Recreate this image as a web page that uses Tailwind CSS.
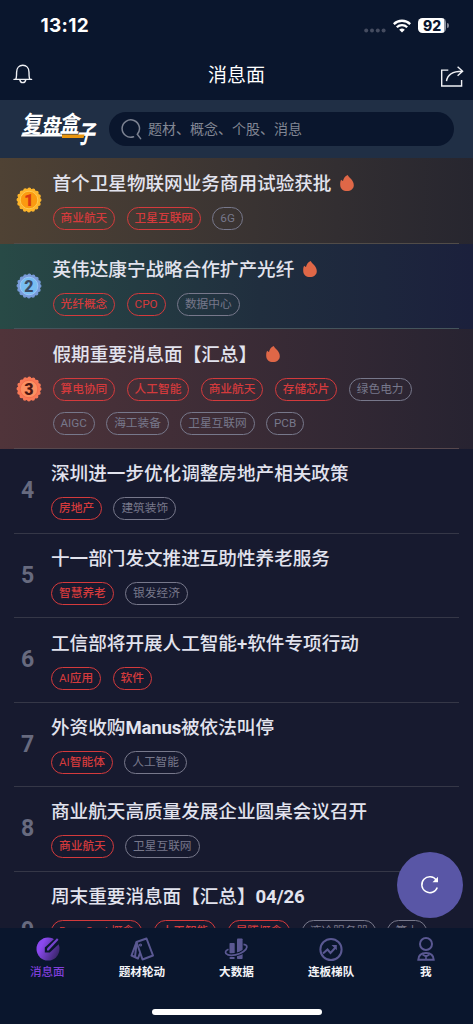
<!DOCTYPE html>
<html lang="zh-CN">
<head>
<meta charset="utf-8">
<title>消息面</title>
<script src="https://cdn.jsdelivr.net/npm/@tailwindcss/browser@4"></script>
</head>
<body class="bg-[#0a162d]">
<svg class="hidden">
  <symbol id="fire" viewBox="0 0 14 16"><path d="M7.800 0C8.600 2.600 13.800 5 13.800 10.200C13.800 13.700 10.800 16 7 16C3.200 16 .2 13.600 .2 9.900C.2 7.600 .3 6 1.200 4.800C1.700 5.500 2.300 5.900 3 6C3.500 3.600 4.800 1.200 7.800 0Z" fill="#df6747"/></symbol>
</svg>
<div class="relative w-[473px] h-[1024px] overflow-hidden flex flex-col font-['Roboto','Noto_Sans_CJK_SC',sans-serif] text-[#e2e3ee]">
  <!-- status bar -->
  <div class="h-[51px] shrink-0 flex items-center justify-between pl-[40.500px] pr-[24px] text-white">
    <span class="font-['Inter',sans-serif] font-bold text-[19px] leading-[22px] tracking-[0.3px] pt-px">13:12</span>
    <div class="flex items-center">
      <svg width="22" height="5" viewBox="0 0 22 5" class="mt-[9px]" fill="#454c60"><circle cx="2.200" cy="2.500" r="2"/><circle cx="8" cy="2.500" r="2"/><circle cx="13.800" cy="2.500" r="2"/><circle cx="19.600" cy="2.500" r="2"/></svg>
      <svg width="18" height="14" viewBox="0 0 18 14" class="ml-[7px]" fill="none" stroke="#fff" stroke-width="2.300"><path d="M.8 5.100a11.700 11.700 0 0 1 16.400 0"/><path d="M3.800 8.300a7.400 7.400 0 0 1 10.400 0"/><path d="M9 13.600L6.200 10.800a4 4 0 0 1 5.600 0Z" fill="#fff" stroke="none"/></svg>
      <div class="ml-[7px] w-[28px] h-[15px] rounded-[4.5px] bg-linear-to-r from-white from-92% to-[#8f95a2] to-92% text-[#0a162d] font-['Inter',sans-serif] font-extrabold text-[14px] leading-[15px] text-center">92</div>
      <div class="ml-px w-[2px] h-[5px] rounded-r-full bg-[#7e8493]"></div>
    </div>
  </div>
  <!-- title bar -->
  <div class="h-[49px] shrink-0 flex items-center justify-between pl-[13px] pr-[9px]">
    <svg width="20" height="20" viewBox="0 0 20 20" class="mb-[3px]" fill="none" stroke="#f0f1f5" stroke-width="1.400" stroke-linecap="round" stroke-linejoin="round"><path d="M1 15.400H18.600M2.700 15.200C3.600 14 3.600 12.600 3.600 8.200C3.600 4 6.200 1.200 9.800 1.200S16 4 16 8.200C16 12.600 16 14 16.900 15.200"/><path d="M6.800 15.600C7.100 17.700 8.300 18.600 9.800 18.600S12.500 17.700 12.800 15.600"/></svg>
    <span class="text-[19px] leading-[28px] text-white">消息面</span>
    <svg width="24" height="22" viewBox="0 0 24 22" class="mt-[3px]" fill="none" stroke="#f0f1f5" stroke-width="1.400"><path d="M8.300 4.100H1.700V20H21.600V14"/><path d="M6.500 15.200C7.200 9.700 11.300 5.200 22.300 5.200M17.600 .8L22.600 5.200L17.600 9.700"/></svg>
  </div>
  <!-- search -->
  <div class="h-[58px] shrink-0 bg-[#202f45] flex items-center pl-[21px] pr-[19px]">
    <svg width="76" height="36" viewBox="0 0 76 36" class="overflow-visible font-['Noto_Sans_CJK_SC',sans-serif]" font-size="20" font-weight="700" fill="#fff">
      <text transform="translate(.6 22.200) skewX(-10) scale(.98 1.200)">复</text>
      <text transform="translate(20 23) skewX(-10) scale(.98 1.080)">盘</text>
      <text transform="translate(38.500 20.800) skewX(-10) scale(.98 1.130)">盒</text>
      <text transform="translate(54.500 32) skewX(-14) scale(.93 1.250)">子</text>
      <path d="M.8 23.300H41V25.500H0Z"/><path d="M41 23.500H63.500L62.500 27H41Z" fill="#e8950f"/>
    </svg>
    <div class="ml-[12px] flex-1 h-[34px] rounded-full bg-[#0a162d] flex items-center pl-[12px]">
      <svg width="21" height="21" viewBox="0 0 21 21" fill="none" stroke="#7c8291" stroke-width="1.500" stroke-linecap="round"><path d="M12.500 17.800A8.700 8.700 0 1 1 16.300 15.300L19.600 19.600"/></svg>
      <span class="ml-[6px] text-[14px] text-[#828794]">题材、概念、个股、消息</span>
    </div>
  </div>
  <!-- news list -->
  <div class="flex-1 min-h-0 overflow-hidden bg-[#171a2f]">
    <div class="relative h-[85.500px] flex bg-linear-to-r from-[#4f4234] to-[#27262f]">
      <div class="w-[52.500px] pl-[16px] pb-px flex items-center"><svg width="26" height="26" viewBox="-13 -13 26 26"><circle r="10.500" fill="#fdb52b" stroke="#fdb52b" stroke-width="4" stroke-linecap="round" stroke-dasharray="0 4.123"/><circle r="11.200" fill="#fdb52b"/><circle r="8.800" fill="#fb9a10" stroke="#fdca50"/><text y="6" text-anchor="middle" font-size="17" font-weight="900" fill="#d93a10">1</text></svg></div>
      <div class="flex-1 pt-[12px]">
        <h2 class="flex items-center h-[29px] text-[18.600px] font-medium whitespace-nowrap">首个卫星物联网业务商用试验获批<svg class="ml-[9px] mb-[4px]" width="14" height="16"><use href="#fire"/></svg></h2>
        <div class="mt-[8px] flex gap-[11.300px] text-[11.700px] leading-[21px]"><span class="h-[23px] px-[7px] rounded-full border border-[#d43a3c] text-[#d43a3c] font-medium">商业航天</span><span class="h-[23px] px-[7px] rounded-full border border-[#d43a3c] text-[#d43a3c] font-medium">卫星互联网</span><span class="h-[23px] px-[7px] rounded-full border border-[#77788b] text-[#77788b]">6G</span></div>
      </div>
      <div class="absolute left-[14px] right-[14px] bottom-0 h-px bg-[#514c48]"></div>
    </div>
    <div class="relative h-[85.500px] flex bg-linear-to-r from-[#284a46] via-[#202e3e] via-55% to-[#1b203c]">
      <div class="w-[52.500px] pl-[16px] pb-px flex items-center"><svg width="26" height="26" viewBox="-13 -13 26 26"><circle r="10.500" fill="#7598d4" stroke="#7598d4" stroke-width="4" stroke-linecap="round" stroke-dasharray="0 4.123"/><circle r="11.200" fill="#7a9ddb"/><circle r="8.800" fill="#78bdf2" stroke="#9ac7f5"/><text y="5.700" text-anchor="middle" font-size="16" font-weight="900" fill="#3b4a61">2</text></svg></div>
      <div class="flex-1 pt-[12.500px]">
        <h2 class="flex items-center h-[29px] text-[18.600px] font-medium whitespace-nowrap">英伟达康宁战略合作扩产光纤<svg class="ml-[9px] mb-[4px]" width="14" height="16"><use href="#fire"/></svg></h2>
        <div class="mt-[7.500px] flex gap-[11.300px] text-[11.700px] leading-[21px]"><span class="h-[23px] px-[7px] rounded-full border border-[#d43a3c] text-[#d43a3c] font-medium">光纤概念</span><span class="h-[23px] px-[7px] rounded-full border border-[#d43a3c] text-[#d43a3c]">CPO</span><span class="h-[23px] px-[7px] rounded-full border border-[#77788b] text-[#77788b]">数据中心</span></div>
      </div>
      <div class="absolute left-[14px] right-[14px] bottom-0 h-px bg-[#45545c]"></div>
    </div>
    <div class="relative h-[120px] flex bg-linear-to-r from-[#50343a] to-[#272331]">
      <div class="w-[52.500px] pl-[16px] pb-px flex items-center"><svg width="26" height="26" viewBox="-13 -13 26 26"><circle r="10.500" fill="#f87957" stroke="#f87957" stroke-width="4" stroke-linecap="round" stroke-dasharray="0 4.123"/><circle r="11.200" fill="#f87957"/><circle r="8.800" fill="#fb8f61" stroke="#f56e4c"/><text y="5.700" text-anchor="middle" font-size="16" font-weight="900" fill="#4b1713">3</text></svg></div>
      <div class="flex-1 pt-[12px]">
        <h2 class="flex items-center h-[29px] text-[18.600px] font-medium whitespace-nowrap">假期重要消息面【汇总】<svg class="ml-[9px] mb-[4px]" width="14" height="16"><use href="#fire"/></svg></h2>
        <div class="mt-[8px] flex gap-[11.300px] text-[11.700px] leading-[21px]"><span class="h-[23px] px-[7px] rounded-full border border-[#d43a3c] text-[#d43a3c] font-medium">算电协同</span><span class="h-[23px] px-[7px] rounded-full border border-[#d43a3c] text-[#d43a3c] font-medium">人工智能</span><span class="h-[23px] px-[7px] rounded-full border border-[#d43a3c] text-[#d43a3c] font-medium">商业航天</span><span class="h-[23px] px-[7px] rounded-full border border-[#d43a3c] text-[#d43a3c] font-medium">存储芯片</span><span class="h-[23px] px-[7px] rounded-full border border-[#77788b] text-[#77788b]">绿色电力</span></div>
        <div class="mt-[11px] flex gap-[11.300px] text-[11.700px] leading-[21px]"><span class="h-[23px] px-[7px] rounded-full border border-[#77788b] text-[#77788b]">AIGC</span><span class="h-[23px] px-[7px] rounded-full border border-[#77788b] text-[#77788b]">海工装备</span><span class="h-[23px] px-[7px] rounded-full border border-[#77788b] text-[#77788b]">卫星互联网</span><span class="h-[23px] px-[7px] rounded-full border border-[#77788b] text-[#77788b]">PCB</span></div>
      </div>
      <div class="absolute left-[14px] right-[14px] bottom-0 h-px bg-[#57484d]"></div>
    </div>
    <div class="mx-[14px] h-[84.600px] flex border-b border-[#353747]">
      <div class="w-[37px] pl-[7px] pt-px flex items-center text-[23px] font-bold text-[#676a7f]">4</div>
      <div class="flex-1 pt-[11px]"><h2 class="h-[29px] leading-[29px] text-[18.600px] font-medium">深圳进一步优化调整房地产相关政策</h2>
        <div class="mt-[8px] flex gap-[11.300px] text-[11.700px] leading-[21px]"><span class="h-[23px] px-[7px] rounded-full border border-[#d43a3c] text-[#d43a3c] font-medium">房地产</span><span class="h-[23px] px-[7px] rounded-full border border-[#77788b] text-[#77788b]">建筑装饰</span></div></div>
    </div>
    <div class="mx-[14px] h-[84.600px] flex border-b border-[#353747]">
      <div class="w-[37px] pl-[7px] pt-px flex items-center text-[23px] font-bold text-[#676a7f]">5</div>
      <div class="flex-1 pt-[11.500px]"><h2 class="h-[29px] leading-[29px] text-[18.600px] font-medium">十一部门发文推进互助性养老服务</h2>
        <div class="mt-[8px] flex gap-[11.300px] text-[11.700px] leading-[21px]"><span class="h-[23px] px-[7px] rounded-full border border-[#d43a3c] text-[#d43a3c] font-medium">智慧养老</span><span class="h-[23px] px-[7px] rounded-full border border-[#77788b] text-[#77788b]">银发经济</span></div></div>
    </div>
    <div class="mx-[14px] h-[84.600px] flex border-b border-[#353747]">
      <div class="w-[37px] pl-[7px] pt-px flex items-center text-[23px] font-bold text-[#676a7f]">6</div>
      <div class="flex-1 pt-[11.500px]"><h2 class="h-[29px] leading-[29px] text-[18.600px] font-medium">工信部将开展人工智能+软件专项行动</h2>
        <div class="mt-[8px] flex gap-[11.300px] text-[11.700px] leading-[21px]"><span class="h-[23px] px-[7px] rounded-full border border-[#d43a3c] text-[#d43a3c]">AI<span class="font-medium">应用</span></span><span class="h-[23px] px-[7px] rounded-full border border-[#d43a3c] text-[#d43a3c] font-medium">软件</span></div></div>
    </div>
    <div class="mx-[14px] h-[84.600px] flex border-b border-[#353747]">
      <div class="w-[37px] pl-[7px] pt-px flex items-center text-[23px] font-bold text-[#676a7f]">7</div>
      <div class="flex-1 pt-[11.500px]"><h2 class="h-[29px] leading-[29px] text-[18.600px] font-medium">外资收购<span class="font-bold tracking-[-0.2px]">Manus</span>被依法叫停</h2>
        <div class="mt-[8px] flex gap-[11.300px] text-[11.700px] leading-[21px]"><span class="h-[23px] px-[7px] rounded-full border border-[#d43a3c] text-[#d43a3c]">AI<span class="font-medium">智能体</span></span><span class="h-[23px] px-[7px] rounded-full border border-[#77788b] text-[#77788b]">人工智能</span></div></div>
    </div>
    <div class="mx-[14px] h-[84.600px] flex border-b border-[#353747]">
      <div class="w-[37px] pl-[7px] pt-px flex items-center text-[23px] font-bold text-[#676a7f]">8</div>
      <div class="flex-1 pt-[11px]"><h2 class="h-[29px] leading-[29px] text-[18.600px] font-medium">商业航天高质量发展企业圆桌会议召开</h2>
        <div class="mt-[8px] flex gap-[11.300px] text-[11.700px] leading-[21px]"><span class="h-[23px] px-[7px] rounded-full border border-[#d43a3c] text-[#d43a3c] font-medium">商业航天</span><span class="h-[23px] px-[7px] rounded-full border border-[#77788b] text-[#77788b]">卫星互联网</span></div></div>
    </div>
    <div class="mx-[14px] h-[119px] flex">
      <div class="w-[37px] pl-[7px] flex items-center text-[23px] font-bold text-[#676a7f]">9</div>
      <div class="flex-1 pt-[11px]"><h2 class="h-[29px] leading-[29px] text-[18.600px] font-medium">周末重要消息面【汇总】<span class="font-bold tracking-[-0.1px]">04/26</span></h2>
        <div class="mt-[8px] flex gap-[11.300px] text-[11.700px] leading-[21px] whitespace-nowrap"><span class="h-[23px] px-[7px] rounded-full border border-[#d43a3c] text-[#d43a3c]">DeepSeek<span class="font-medium">概念</span></span><span class="h-[23px] px-[7px] rounded-full border border-[#d43a3c] text-[#d43a3c] font-medium">人工智能</span><span class="h-[23px] px-[7px] rounded-full border border-[#d43a3c] text-[#d43a3c] font-medium">昇腾概念</span><span class="h-[23px] px-[7px] rounded-full border border-[#77788b] text-[#77788b]">液冷服务器</span><span class="h-[23px] px-[7px] rounded-full border border-[#77788b] text-[#77788b]">算力</span></div></div>
    </div>
  </div>
  <!-- tab bar -->
  <div class="h-[96px] shrink-0 bg-[#0a162d] flex flex-col items-center">
    <div class="w-full grid grid-cols-5 pt-[8px] text-[11.600px] leading-[18px] font-bold text-[#f2f3f7] text-center">
      <div class="flex flex-col items-center gap-[1px] text-[#7f3fd8] font-medium">
        <svg width="26" height="26" viewBox="0 0 26 26"><defs><linearGradient id="g" x1="0" y1=".3" x2="1" y2=".8"><stop offset=".2" stop-color="#8a48ee"/><stop offset="1" stop-color="#32235f"/></linearGradient></defs><circle cx="14" cy="13" r="11.500" fill="url(#g)"/><path d="M24.500 -1L10.800 11.500V16.500H15.800L28 5Z" fill="#0a162d"/><path d="M13 14.400V12.600L23 2.200L24.500 3.700L14.600 14.400Z" fill="#7443cc"/></svg>消息面</div>
      <div class="flex flex-col items-center gap-[1px]">
        <svg width="26" height="26" viewBox="0 0 26 26" fill="none" stroke="#5a5892" stroke-width="2" stroke-linejoin="round"><path d="M7.500 6L17.500 2.500L24 19.500L13.500 23.500L7.500 6Z"/><path d="M7.500 6L2.500 19.500L9 22.500L11 17M7.500 8L6 21"/><circle cx="11.500" cy="9" r=".6"/></svg>题材轮动</div>
      <div class="flex flex-col items-center gap-[1px]">
        <svg width="26" height="26" viewBox="0 0 26 26" fill="#5a5892"><rect x="6.500" y="7" width="5.200" height="10.500" rx=".8"/><rect x="14" y="2.500" width="5.600" height="20.500" rx=".8"/><rect x="6.500" y="21" width="5.200" height="2" rx=".8"/><path d="M5.500 13.200C1.500 14.800 1.800 17.200 4.500 18.600C8.500 20.300 16.500 18.500 20.500 15.500C24.500 12.500 25.500 9 20.500 8.400" fill="none" stroke="#0a162d" stroke-width="3.600"/><path d="M5.500 13.200C1.500 14.800 1.800 17.200 4.500 18.600C8.500 20.300 16.500 18.500 20.500 15.500C24.500 12.500 25.500 9 20.500 8.400" fill="none" stroke="#5a5892" stroke-width="1.700"/></svg>大数据</div>
      <div class="flex flex-col items-center gap-[1px]">
        <svg width="26" height="26" viewBox="0 0 26 26" fill="none" stroke="#5a5892" stroke-width="2"><circle cx="13" cy="13.500" r="10.600"/><path d="M5 17.500L9.500 13.500L12.500 17L17.500 11.500"/><path d="M13.500 9H18.800V14.300Z" fill="#5a5892" stroke="none"/></svg>连板梯队</div>
      <div class="flex flex-col items-center gap-[1px]">
        <svg width="26" height="26" viewBox="0 0 26 26" fill="none" stroke="#5a5892" stroke-width="2"><circle cx="13" cy="8" r="6"/><path d="M5.300 23.700C5.500 19.500 8.500 17 13 17S20.500 19.500 20.700 23.700Z"/><path d="M9.500 18.500L13 20.500L16.500 18.500M13 19V24" stroke-width="1.700"/></svg>我</div>
    </div>
    <div class="mt-[28px] w-[170px] h-[6px] rounded-full bg-white"></div>
  </div>
  <!-- refresh button -->
  <div class="absolute left-[397px] top-[852px] w-[66px] h-[66px] rounded-full bg-[#5956a6] flex items-center justify-center">
    <svg width="20" height="20" viewBox="0 0 20 20" fill="none" stroke="#fff" stroke-width="1.500"><path d="M17.300 12.500A8 8 0 1 1 16.300 5"/><path d="M18 1.800V7.300H12.500Z" fill="#fff" stroke="none"/></svg>
  </div>
</div>
</body>
</html>
